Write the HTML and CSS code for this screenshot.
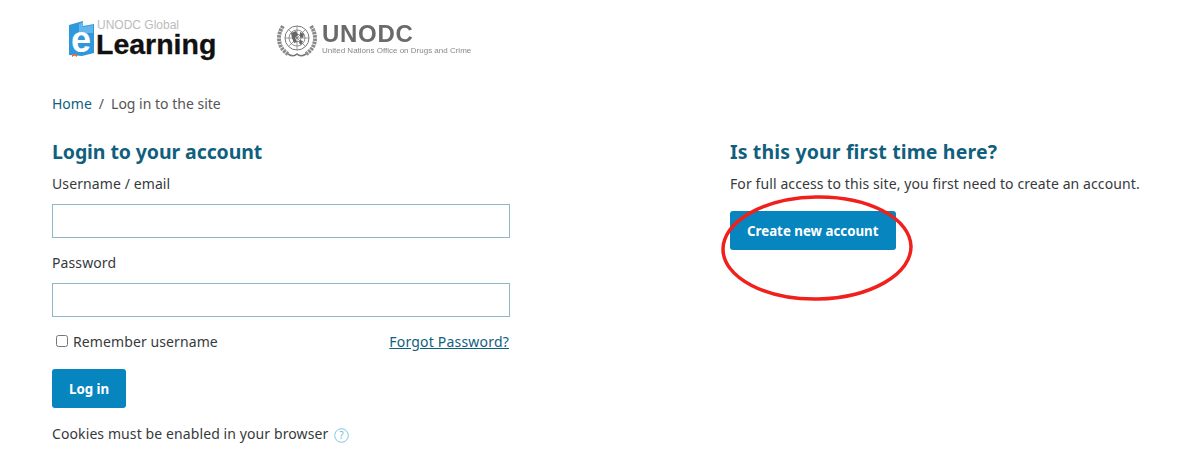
FILE: index.html
```html
<!DOCTYPE html>
<html lang="en">
<head>
    <meta charset="UTF-8">
    <title>Log in to the site</title>
    <link rel="stylesheet" href="styles.css">
</head>
<body>
    <header class="logos">
        <div class="logo-elearning">
            <svg class="book" width="25" height="36" viewBox="0 0 25 36">
                <path d="M0 4 L14 0 L14 5 L25 3 L25 32 L13 35 L0 34 Z" fill="#2f97dc"/>
                <path d="M14 1 L14 6 L24 4 L24 12 L10 12 L10 3 Z" fill="#62b6ea"/>
                <path d="M3 33 h5 v3 l-2.500 -1.500 l-2.500 1.500 Z" fill="#e2703a"/>
            </svg>
            <span class="e-mark">e</span>
            <div class="logo-words">
                <span class="logo-small">UNODC Global</span>
                <span class="logo-big">Learning</span>
            </div>
        </div>
        <div class="logo-unodc">
            <svg class="un-emblem" width="40" height="34" viewBox="0 0 40 34">
                <g fill="none" stroke="#777">
                    <circle cx="20" cy="15" r="12" stroke-width="1"/>
                    <circle cx="20" cy="15" r="8" stroke-width="0.8"/>
                    <circle cx="20" cy="15" r="4" stroke-width="0.8"/>
                    <path d="M20 3 V27 M8 15 H32 M11.500 6.500 L28.500 23.500 M28.500 6.500 L11.500 23.500" stroke-width="0.7"/>
                    <path d="M6 3 C0 12 0 24 11 31 M34 3 C40 12 40 24 29 31" stroke="#8a8a8a" stroke-width="4" stroke-dasharray="2.500 0.800"/>
                    <path d="M11 31 C15 33.500 18 33 20 31 C22 33 25 33.500 29 31" stroke-width="1.500"/>
                </g>
                <path d="M14 10 L19 8 L21 12 L18 15 L20 19 L17 20 L15 15 Z M23 9 L27 11 L26 15 L23 14 Z M23 17 L26 18 L24 22 L22 20 Z" fill="#666"/>
            </svg>
            <div class="unodc-words">
                <span class="unodc-big">UNODC</span>
                <span class="unodc-small">United Nations Office on Drugs and Crime</span>
            </div>
        </div>
    </header>

    <nav class="breadcrumb">
        <a href="#">Home</a>
        <span class="sep">/</span>
        <span>Log in to the site</span>
    </nav>

    <main class="columns">
        <section class="login-box">
            <h2>Login to your account</h2>
            <form>
                <label class="field-label" for="username">Username / email</label>
                <input class="field" type="text" id="username">
                <label class="field-label" for="password">Password</label>
                <input class="field" type="password" id="password">
                <div class="form-row">
                    <label class="remember"><input type="checkbox"> Remember username</label>
                    <a class="forgot" href="#">Forgot Password?</a>
                </div>
                <button class="btn" type="button">Log in</button>
            </form>
            <p class="cookies">
                Cookies must be enabled in your browser
                <svg class="help" width="15" height="15" viewBox="0 0 15 15">
                    <circle cx="7.500" cy="7.500" r="6.800" fill="none" stroke="#7fc8da" stroke-width="1"/>
                    <text x="7.500" y="11" text-anchor="middle" class="help-mark">?</text>
                </svg>
            </p>
        </section>

        <section class="signup-box">
            <h2>Is this your first time here?</h2>
            <p>For full access to this site, you first need to create an account.</p>
            <div class="signup-action">
                <button class="btn" type="button">Create new account</button>
                <svg class="circled" width="196" height="114" viewBox="0 0 196 114">
                    <ellipse cx="97" cy="58" rx="94" ry="51" transform="rotate(-1 97 58)" fill="none" stroke="#f0201c" stroke-width="3.500"/>
                </svg>
            </div>
        </section>
    </main>
</body>
</html>
```

FILE: styles.css
```css
body {
    margin: 0;
    background-color: #fff;
    color: #373a3c;
    font-family: 'Noto Sans', 'Open Sans', sans-serif;
    font-size: 14px;
    line-height: 20px;
    letter-spacing: 0.1px;
}
a {
    color: #115f7e;
    text-decoration: none;
}
.logos {
    display: flex;
    height: 70px;
    padding-left: 69px;
    box-sizing: border-box;
    letter-spacing: 0;
}
.logo-elearning {
    position: relative;
    display: flex;
    width: 208px;
    padding-top: 21px;
    box-sizing: border-box;
}
.book {
    flex: none;
    margin-right: 2px;
}
.e-mark {
    position: absolute;
    left: 2px;
    top: 25px;
    color: #fff;
    font-family: 'Liberation Sans', sans-serif;
    font-weight: 700;
    font-size: 36px;
    line-height: 30px;
}
.logo-words {
    display: flex;
    flex-direction: column;
}
.logo-small {
    margin-top: -2px;
    margin-left: 1px;
    color: #bbb;
    font-family: 'Liberation Sans', sans-serif;
    font-size: 12px;
    line-height: 12px;
}
.logo-big {
    color: #111;
    font-family: 'Liberation Sans', sans-serif;
    font-weight: 700;
    font-size: 28.500px;
    line-height: 27px;
    -webkit-text-stroke: 0.3px #111;
}
.logo-unodc {
    display: flex;
    padding-top: 23px;
    gap: 5px;
    filter: blur(0.3px);
}
.unodc-words {
    display: flex;
    flex-direction: column;
}
.unodc-big {
    color: #6a6a6a;
    font-family: 'Liberation Sans', sans-serif;
    font-weight: 700;
    font-size: 24px;
    line-height: 22px;
    letter-spacing: 0.7px;
}
.unodc-small {
    color: #888;
    font-family: 'Liberation Sans', sans-serif;
    font-size: 8px;
    line-height: 12px;
}
.breadcrumb {
    display: flex;
    gap: 7px;
    padding: 24px 0 0 52px;
    color: #555;
    letter-spacing: 0;
}
.columns {
    display: flex;
    padding: 25px 0 0 52px;
}
h2 {
    margin: 0;
    color: #115f7e;
    font-size: 19.500px;
    line-height: 26px;
    font-weight: 700;
    letter-spacing: 0.14px;
}
.login-box {
    width: 458px;
    margin-right: 220px;
}
.login-box h2 {
    letter-spacing: -0.1px;
}
.field-label {
    display: block;
    margin-top: 9px;
    line-height: 20px;
}
.field {
    display: block;
    width: 100%;
    height: 34px;
    margin: 10px 0 15px;
    box-sizing: border-box;
    border: 1px solid #8fb8c6;
    background: #fff;
}
.form-row {
    display: flex;
    justify-content: space-between;
    align-items: center;
}
.remember {
    display: flex;
    align-items: center;
    gap: 5px;
    margin-left: 4px;
}
.remember input {
    width: 12px;
    height: 12px;
    margin: -3px 0 0;
}
.forgot {
    text-decoration: underline;
    letter-spacing: 0.2px;
    margin-right: 1px;
}
.btn {
    display: block;
    height: 39px;
    padding: 0 17px;
    border: none;
    border-radius: 3px;
    background-color: #0685bf;
    color: #fff;
    font-family: inherit;
    font-size: 13.300px;
    font-weight: 700;
    letter-spacing: 0;
}
.login-box .btn {
    margin-top: 17px;
}
.cookies {
    margin: 16px 0 0;
}
.help {
    vertical-align: -4px;
    margin-left: 2px;
}
.help-mark {
    fill: #6fbcd0;
    font-size: 10px;
}
.signup-box p {
    margin: 9px 0 0;
}
.signup-action {
    position: relative;
    margin-top: 17px;
}
.circled {
    position: absolute;
    left: -10px;
    top: -21px;
}
```
